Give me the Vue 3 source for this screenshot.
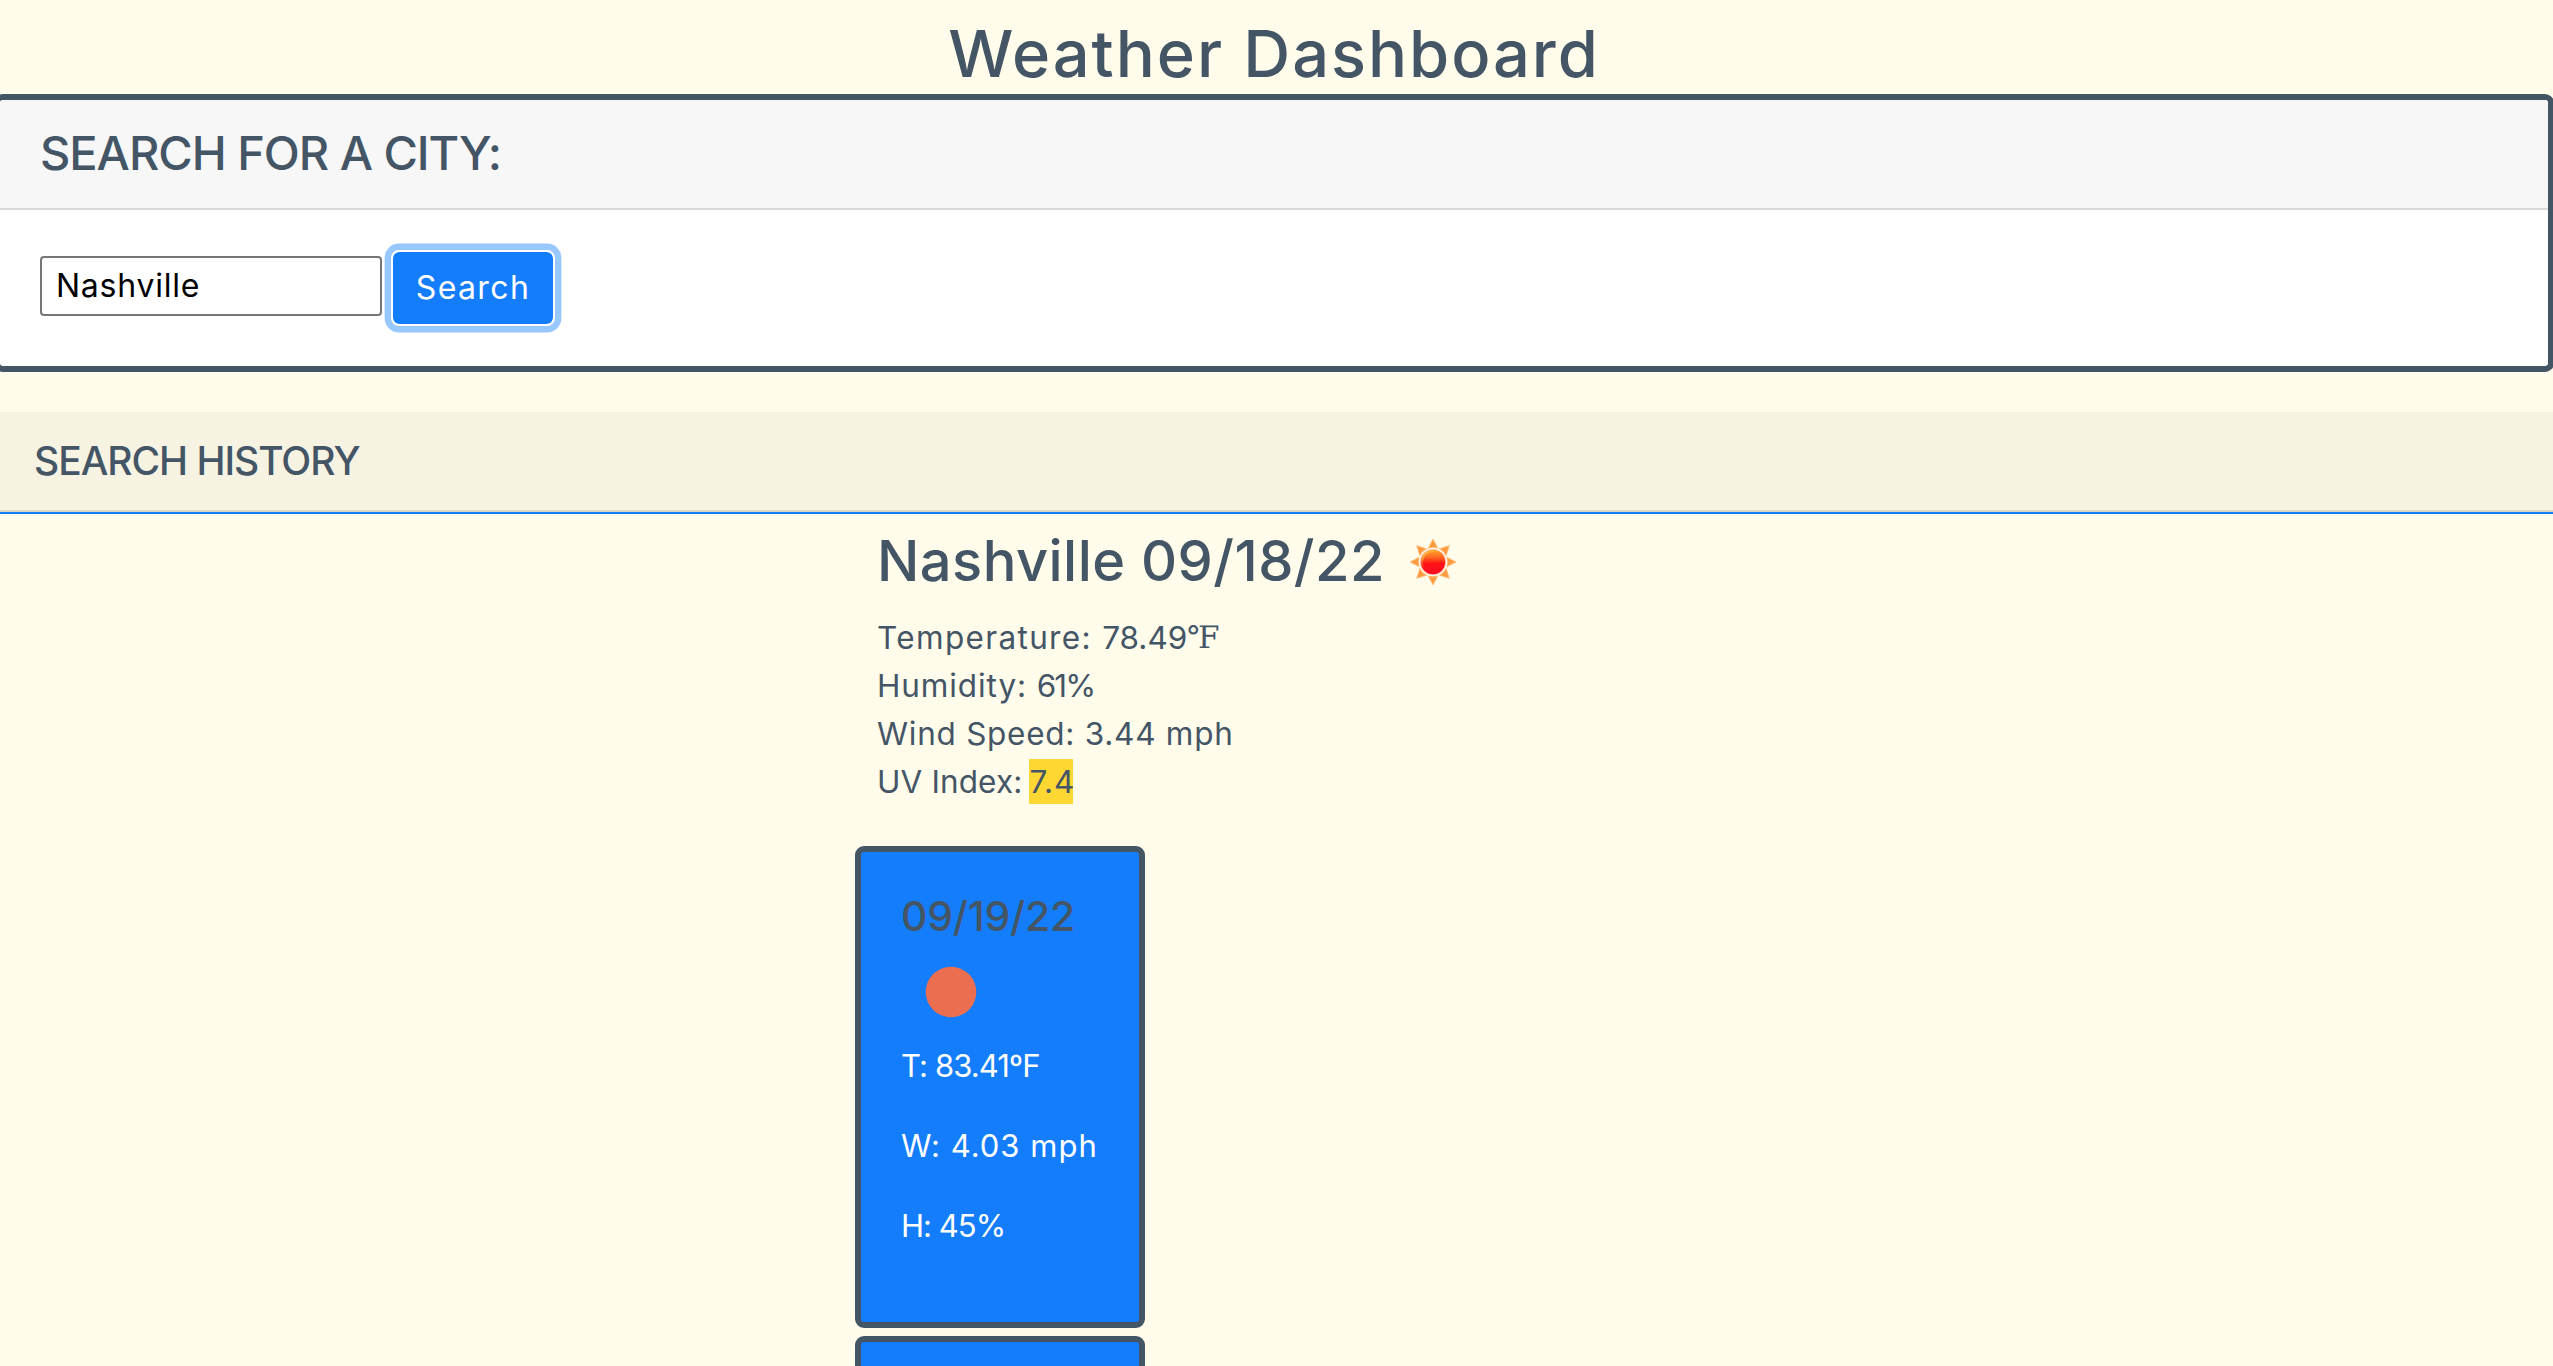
<script setup>
import { ref } from 'vue'

const city = ref('Nashville')

const forecast = [
  {
    date: '09/19/22',
    lines: [
      { text: 'T: 83.41ºF', tracking: -0.89 },
      { text: 'W: 4.03 mph', tracking: 1.01 },
      { text: 'H: 45%', tracking: -0.97 },
    ],
  },
  { date: '', lines: [] },
]

const rays = [0, 45, 90, 135, 180, 225, 270, 315]
</script>

<template>
  <div class="page">
    <h1 class="title">Weather Dashboard</h1>

    <section class="search-card">
      <h3 class="search-head">SEARCH FOR A CITY:</h3>
      <form class="search-body" @submit.prevent>
        <input v-model="city" class="city-input" type="text" />
        <button class="search-btn" type="submit">Search</button>
      </form>
    </section>

    <section class="history">
      <h4 class="history-head">SEARCH HISTORY</h4>
    </section>

    <main class="results">
      <div class="current">
        <h2 class="current-head">
          <span>Nashville 09/18/22</span>
          <svg class="sun" viewBox="-25 -25 50 50" width="50" height="50">
            <defs>
              <linearGradient id="sunFill" x1="0" y1="0" x2="0" y2="1">
                <stop offset="0" stop-color="#ff9f24" />
                <stop offset="0.3" stop-color="#ff6a20" />
                <stop offset="0.55" stop-color="#ff1418" />
                <stop offset="1" stop-color="#fa0a20" />
              </linearGradient>
              <linearGradient id="sunShine" x1="0" y1="0" x2="1" y2="1">
                <stop offset="0" stop-color="#ffd45a" />
                <stop offset="0.45" stop-color="#ffae3c" stop-opacity="0" />
              </linearGradient>
            </defs>
            <path
              v-for="r in rays"
              :key="r"
              d="M-4.6 -14 L0 -22.8 L4.6 -14 Q0 -15.6 -4.6 -14Z"
              fill="#ff9a3c"
              stroke="#ffb873"
              stroke-width="1"
              :transform="`rotate(${r})`"
            />
            <circle r="13.1" fill="#ffc9b8" />
            <circle r="12.2" fill="url(#sunFill)" />
            <circle r="11" fill="none" stroke="url(#sunShine)" stroke-width="2" />
          </svg>
        </h2>
        <p class="line temp">Temperature: <span class="value">78.49</span><span class="unit">℉</span></p>
        <p class="line humidity">Humidity: <span class="value">61%</span></p>
        <p class="line wind">Wind Speed: 3.44 mph</p>
        <p class="line uv">UV Index:<span class="uv-badge">7.4</span></p>
      </div>

      <article v-for="(day, i) in forecast" :key="i" class="day-card">
        <h5 class="day-date">{{ day.date }}</h5>
        <div class="day-icon">
          <svg viewBox="0 0 52 52" width="52" height="52"><circle cx="26" cy="26" r="25.3" fill="#eb6e51" /></svg>
        </div>
        <p
          v-for="l in day.lines"
          :key="l.text"
          class="day-line"
          :style="{ letterSpacing: l.tracking + 'px' }"
        >{{ l.text }}</p>
      </article>
    </main>
  </div>
</template>

<style>
body {
  background: #fffceb;
}
</style>

<style scoped>
.page {
  height: 1366px;
  overflow: hidden;
  background: #fffceb;
  color: #445566;
  font-family: Inter, sans-serif;
  font-size: 31px;
}
h1, h2, h3, h4, h5, p {
  margin: 0;
  font-weight: 500;
}
p {
  font-weight: 400;
}
.title {
  padding: 14px 5px 0 0;
  font-size: 65px;
  line-height: 80px;
  letter-spacing: 1.95px;
  text-align: center;
}
.search-card {
  margin: 0 -1px 40px -6px;
  border: 6px solid #445566;
  border-radius: 9px;
  background: #fff;
  overflow: hidden;
}
.search-head {
  padding: 0 40px 2px;
  border-bottom: 2px solid #d9d9d9;
  background: #f7f7f7;
  font-size: 47px;
  line-height: 106px;
  letter-spacing: -1.05px;
}
.search-body {
  display: flex;
  align-items: flex-start;
  gap: 9px;
  height: 116px;
  padding: 40px 40px 0;
}
.city-input {
  box-sizing: border-box;
  width: 342px;
  height: 60px;
  margin: 6px 0 0;
  padding: 0 14px 2px;
  border: 2px solid #767676;
  border-radius: 4px;
  outline: none;
  background: #fff;
  color: #000;
  font: inherit;
  font-size: 32px;
  letter-spacing: 0.75px;
}
.search-btn {
  box-sizing: border-box;
  width: 164px;
  height: 76px;
  padding: 0 0 2px;
  border: 2px solid #fff;
  border-radius: 8px;
  box-shadow: 0 0 0 6.4px #97c8ff;
  background: #147dfc;
  background-clip: padding-box;
  color: #fff;
  font: inherit;
  font-size: 32px;
  letter-spacing: 1.4px;
}
.history-head {
  padding-left: 34px;
  border-bottom: 2px solid #dcd8c6;
  background: #f7f3e3;
  font-size: 39px;
  line-height: 98px;
  letter-spacing: -1.04px;
}
.history {
  border-bottom: 2px solid #147dfc;
}
.results {
  margin-left: 855px;
}
.current {
  height: 292px;
  margin-bottom: 40px;
  padding-left: 22px;
}
.current-head {
  display: flex;
  align-items: center;
  height: 93px;
  margin-bottom: 7px;
  font-size: 56px;
  letter-spacing: 0.45px;
  white-space: nowrap;
}
.sun {
  margin: 3px 0 0 23px;
}
.line {
  display: flex;
  height: 48px;
  font-size: 31.5px;
  line-height: 48px;
  white-space: pre;
}
.temp { letter-spacing: 1.35px; }
.temp .value { letter-spacing: 0; }
.humidity { letter-spacing: 0.9px; }
.humidity .value { letter-spacing: -1.9px; }
.wind { letter-spacing: 0.74px; }
.uv { letter-spacing: 0.12px; }
.unit {
  font-family: "Liberation Serif", "DejaVu Serif", serif;
  font-size: 31px;
  letter-spacing: 0;
}
.uv-badge {
  width: 44px;
  height: 45px;
  margin: 1px 0 0 7px;
  background: #fed732;
  line-height: 46px;
  letter-spacing: 0.8px;
}
.day-card {
  box-sizing: border-box;
  width: 290px;
  height: 482px;
  margin-bottom: 8px;
  padding: 40px;
  border: 6px solid #445566;
  border-radius: 9px;
  background: #147dfc;
  color: #fff;
  white-space: nowrap;
}
.day-date {
  height: 48px;
  color: #445566;
  font-size: 41px;
  line-height: 48px;
  letter-spacing: -0.24px;
}
.day-icon {
  display: flex;
  align-items: center;
  box-sizing: border-box;
  height: 102px;
  padding: 2px 0 0 24px;
}
.day-line {
  margin-bottom: 32px;
  line-height: 48px;
}
</style>
